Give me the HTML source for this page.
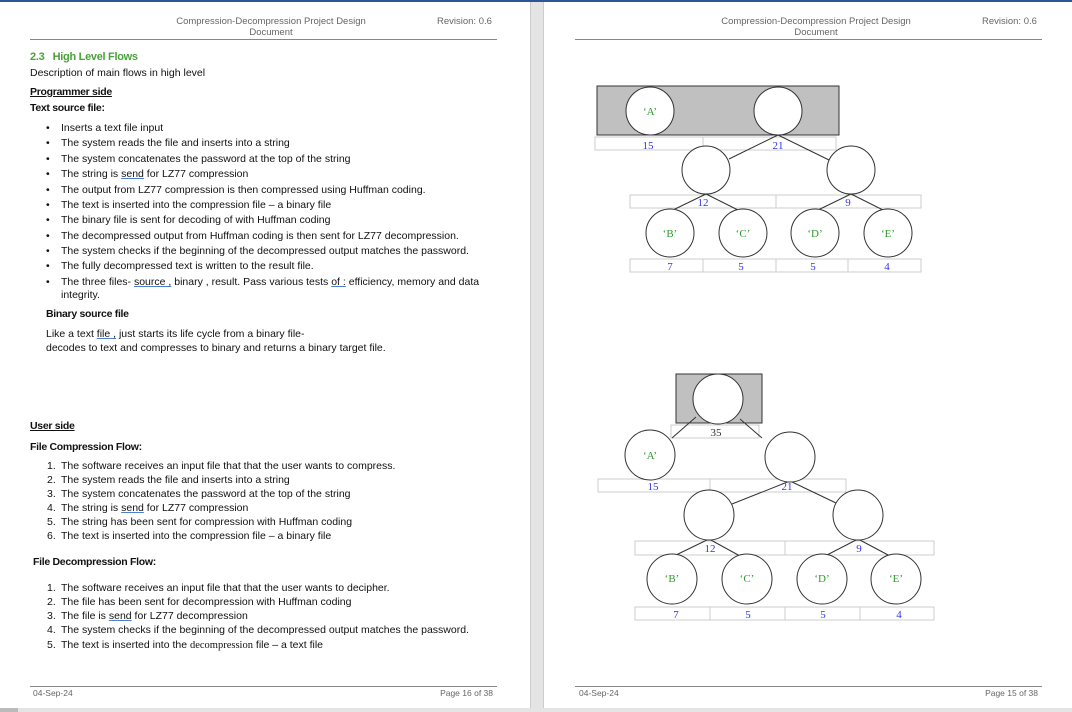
<!DOCTYPE html>
<html><head><meta charset="utf-8"><style>
body{margin:0;width:1072px;height:712px;position:relative;overflow:hidden;background:#fff;font-family:"Liberation Sans",sans-serif;color:#111}
.t{position:absolute;font-size:10.5px;line-height:14px;white-space:nowrap}
.h{color:#666;font-size:9.5px}
.b{font-weight:bold;letter-spacing:-0.3px}
.u{text-decoration:underline}
.sq{text-decoration:underline;text-decoration-color:#4a7fd4}
.f{position:absolute;font-size:8.5px;color:#666;line-height:10px}
.ln{position:absolute;height:1px;background:#888}
</style></head><body>
<div style="position:absolute;left:0;top:0;width:1072px;height:2px;background:#2b579a"></div>
<div style="position:absolute;left:530px;top:2px;width:12px;height:706px;background:#e4e4e4;border-left:1px solid #ccc;border-right:1px solid #ccc"></div>
<div style="position:absolute;left:0;top:708px;width:1072px;height:4px;background:#e4e4e4"></div>
<div style="position:absolute;left:0;top:708px;width:18px;height:4px;background:#bbb"></div>

<!-- left header -->
<div class="t h" style="left:171px;top:15px;width:200px;text-align:center">Compression-Decompression Project Design</div>
<div class="t h" style="left:171px;top:26px;width:200px;text-align:center">Document</div>
<div class="t h" style="left:437px;top:15px">Revision: 0.6</div>
<div class="ln" style="left:30px;top:39px;width:467px"></div>

<div class="t b" style="left:30px;top:50px;color:#4aa23a;font-size:11px">2.3&nbsp;&nbsp; High Level Flows</div>
<div class="t" style="left:30px;top:66px">Description of main flows in high level</div>
<div class="t b u" style="left:30px;top:85px">Programmer side</div>
<div class="t b" style="left:30px;top:101px">Text source file:</div>

<div class="t" style="left:46px;top:121px">•</div><div class="t" style="left:61px;top:121px">Inserts a text file input</div>
<div class="t" style="left:46px;top:136px">•</div><div class="t" style="left:61px;top:136px">The system reads the file and inserts into a string</div>
<div class="t" style="left:46px;top:152px">•</div><div class="t" style="left:61px;top:152px">The system concatenates the password at the top of the string</div>
<div class="t" style="left:46px;top:167px">•</div><div class="t" style="left:61px;top:167px">The string is <span class="sq">send</span> for LZ77 compression</div>
<div class="t" style="left:46px;top:183px">•</div><div class="t" style="left:61px;top:183px">The output from LZ77 compression is then compressed using Huffman coding.</div>
<div class="t" style="left:46px;top:198px">•</div><div class="t" style="left:61px;top:198px">The text is inserted into the compression file – a binary file</div>
<div class="t" style="left:46px;top:213px">•</div><div class="t" style="left:61px;top:213px">The binary file is sent for decoding of with Huffman coding</div>
<div class="t" style="left:46px;top:229px">•</div><div class="t" style="left:61px;top:229px">The decompressed output from Huffman coding is then sent for LZ77 decompression.</div>
<div class="t" style="left:46px;top:244px">•</div><div class="t" style="left:61px;top:244px">The system checks if the beginning of the decompressed output matches the password.</div>
<div class="t" style="left:46px;top:259px">•</div><div class="t" style="left:61px;top:259px">The fully decompressed text is written to the result file.</div>
<div class="t" style="left:46px;top:275px">•</div><div class="t" style="left:61px;top:275px">The three files- <span class="sq">source ,</span> binary , result. Pass various tests <span class="sq">of :</span> efficiency, memory and data</div>
<div class="t" style="left:61px;top:288px">integrity.</div>

<div class="t b" style="left:46px;top:307px">Binary source file</div>
<div class="t" style="left:46px;top:327px">Like a text <span class="sq">file ,</span> just starts its life cycle from a binary file-</div>
<div class="t" style="left:46px;top:341px">decodes to text and compresses to binary and returns a binary target file.</div>

<div class="t b u" style="left:30px;top:419px">User side</div>
<div class="t b" style="left:30px;top:440px">File Compression Flow:</div>
<div class="t" style="left:47px;top:459px">1.</div><div class="t" style="left:61px;top:459px">The software receives an input file that that the user wants to compress.</div>
<div class="t" style="left:47px;top:473px">2.</div><div class="t" style="left:61px;top:473px">The system reads the file and inserts into a string</div>
<div class="t" style="left:47px;top:487px">3.</div><div class="t" style="left:61px;top:487px">The system concatenates the password at the top of the string</div>
<div class="t" style="left:47px;top:501px">4.</div><div class="t" style="left:61px;top:501px">The string is <span class="sq">send</span> for LZ77 compression</div>
<div class="t" style="left:47px;top:515px">5.</div><div class="t" style="left:61px;top:515px">The string has been sent for compression with Huffman coding</div>
<div class="t" style="left:47px;top:529px">6.</div><div class="t" style="left:61px;top:529px">The text is inserted into the compression file – a binary file</div>

<div class="t b" style="left:33px;top:555px">File Decompression Flow:</div>
<div class="t" style="left:47px;top:581px">1.</div><div class="t" style="left:61px;top:581px">The software receives an input file that that the user wants to decipher.</div>
<div class="t" style="left:47px;top:595px">2.</div><div class="t" style="left:61px;top:595px">The file has been sent for decompression with Huffman coding</div>
<div class="t" style="left:47px;top:609px">3.</div><div class="t" style="left:61px;top:609px">The file is <span class="sq">send</span> for LZ77 decompression</div>
<div class="t" style="left:47px;top:623px">4.</div><div class="t" style="left:61px;top:623px">The system checks if the beginning of the decompressed output matches the password.</div>
<div class="t" style="left:47px;top:638px">5.</div><div class="t" style="left:61px;top:638px">The text is inserted into the <span style="font-family:'Liberation Serif',serif">decompression</span> file – a text file</div>

<div class="ln" style="left:30px;top:686px;width:467px"></div>
<div class="f" style="left:33px;top:688px">04-Sep-24</div>
<div class="f" style="left:420px;top:688px;width:73px;text-align:right">Page 16 of 38</div>

<!-- right header -->
<div class="t h" style="left:716px;top:15px;width:200px;text-align:center">Compression-Decompression Project Design</div>
<div class="t h" style="left:716px;top:26px;width:200px;text-align:center">Document</div>
<div class="t h" style="left:982px;top:15px">Revision: 0.6</div>
<div class="ln" style="left:575px;top:39px;width:467px"></div>
<div class="ln" style="left:575px;top:686px;width:467px"></div>
<div class="f" style="left:579px;top:688px">04-Sep-24</div>
<div class="f" style="left:965px;top:688px;width:73px;text-align:right">Page 15 of 38</div>

<svg style="position:absolute;left:0;top:0" width="1072" height="712" font-family="Liberation Serif, serif" font-size="11" text-anchor="middle">
<g fill="#fff" stroke="#ccc" stroke-width="1">
<rect x="595" y="137" width="108" height="13"/><rect x="703" y="137" width="133" height="13"/>
<rect x="630" y="195" width="146" height="13"/><rect x="776" y="195" width="145" height="13"/>
<rect x="630" y="259" width="73" height="13"/><rect x="703" y="259" width="73" height="13"/><rect x="776" y="259" width="72" height="13"/><rect x="848" y="259" width="73" height="13"/>
<rect x="671" y="425" width="88" height="13"/>
<rect x="598" y="479" width="112" height="13"/><rect x="710" y="479" width="136" height="13"/>
<rect x="635" y="541" width="150" height="14"/><rect x="785" y="541" width="149" height="14"/>
<rect x="635" y="607" width="75" height="13"/><rect x="710" y="607" width="75" height="13"/><rect x="785" y="607" width="75" height="13"/><rect x="860" y="607" width="74" height="13"/>
</g>
<rect x="597" y="86" width="242" height="49" fill="#c0c0c0" stroke="#333"/>
<rect x="676" y="374" width="86" height="49" fill="#c0c0c0" stroke="#333"/>
<g stroke="#333" stroke-width="1">
<line x1="778" y1="135" x2="729" y2="159"/><line x1="778" y1="135" x2="829" y2="160"/>
<line x1="706" y1="194" x2="673" y2="210"/><line x1="706" y1="194" x2="738" y2="210"/>
<line x1="851" y1="194" x2="818" y2="210"/><line x1="851" y1="194" x2="883" y2="210"/>
<line x1="696" y1="417" x2="672" y2="438"/><line x1="740" y1="419" x2="762" y2="438"/>
<line x1="790" y1="481" x2="732" y2="504"/><line x1="790" y1="481" x2="836" y2="503"/>
<line x1="709" y1="539" x2="676" y2="555"/><line x1="709" y1="539" x2="740" y2="556"/>
<line x1="858" y1="539" x2="825" y2="556"/><line x1="858" y1="539" x2="890" y2="556"/>
</g>
<g fill="#fff" stroke="#333" stroke-width="1">
<circle cx="650" cy="111" r="24"/><circle cx="778" cy="111" r="24"/>
<circle cx="706" cy="170" r="24"/><circle cx="851" cy="170" r="24"/>
<circle cx="670" cy="233" r="24"/><circle cx="743" cy="233" r="24"/><circle cx="815" cy="233" r="24"/><circle cx="888" cy="233" r="24"/>
<circle cx="718" cy="399" r="25"/>
<circle cx="650" cy="455" r="25"/><circle cx="790" cy="457" r="25"/>
<circle cx="709" cy="515" r="25"/><circle cx="858" cy="515" r="25"/>
<circle cx="672" cy="579" r="25"/><circle cx="747" cy="579" r="25"/><circle cx="822" cy="579" r="25"/><circle cx="896" cy="579" r="25"/>
</g>
<g fill="#2e9a2e">
<text x="650" y="115">‘A’</text><text x="670" y="237">‘B’</text><text x="743" y="237">‘C’</text><text x="815" y="237">‘D’</text><text x="888" y="237">‘E’</text>
<text x="650" y="459">‘A’</text><text x="672" y="582">‘B’</text><text x="747" y="582">‘C’</text><text x="822" y="582">‘D’</text><text x="896" y="582">‘E’</text>
</g>
<g fill="#3333ee">
<text x="648" y="149">15</text><text x="778" y="149">21</text><text x="703" y="206">12</text><text x="848" y="206">9</text>
<text x="670" y="270">7</text><text x="741" y="270">5</text><text x="813" y="270">5</text><text x="887" y="270">4</text>
<text x="653" y="490">15</text><text x="787" y="490">21</text><text x="710" y="552">12</text><text x="859" y="552">9</text>
<text x="676" y="618">7</text><text x="748" y="618">5</text><text x="823" y="618">5</text><text x="899" y="618">4</text>
</g>
<text x="716" y="436" fill="#333">35</text>
</svg>
</body></html>
